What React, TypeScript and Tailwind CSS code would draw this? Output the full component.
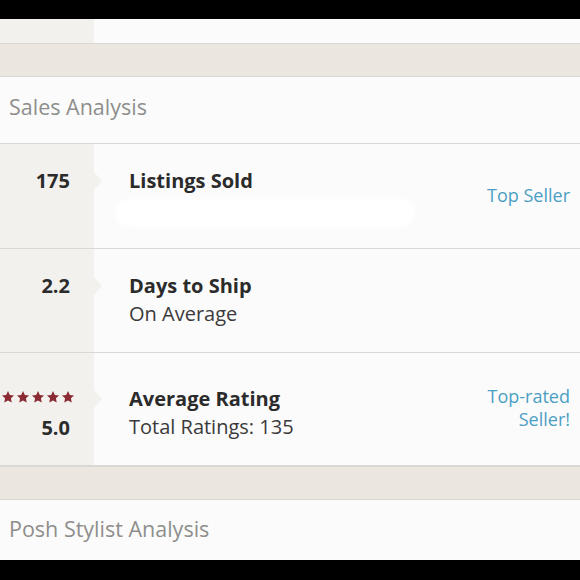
import React from "react";

const font = { fontFamily: "'Open Sans', Lato, 'Liberation Sans', sans-serif" };

function Star() {
  return (
    <svg viewBox="0 0 24 24" className="h-[14px] w-[14px]" aria-hidden>
      <path
        d="M12 1.8l3.1 6.6 7.2.9-5.3 5 1.4 7.1L12 17.9l-6.4 3.5 1.4-7.1-5.3-5 7.2-.9z"
        fill="#8a2a33"
      />
    </svg>
  );
}

function Notch({ top }: { top: string }) {
  return (
    <span
      className={`absolute left-[94px] ${top} h-0 w-0 border-y-[9px] border-l-[8px] border-y-transparent border-l-[#f2f1ed]`}
    />
  );
}

function Divider() {
  return <div className="h-[34px] border-y border-[#d9d8d4] bg-[#ebe7df]" />;
}

type RowProps = {
  left: React.ReactNode;
  title: string;
  sub?: React.ReactNode;
  right?: React.ReactNode;
  height: string;
  pad: string;
  notchTop: string;
};

function StatRow({ left, title, sub, right, height, pad, notchTop }: RowProps) {
  return (
    <div className={`relative flex border-b border-[#d9d8d4] ${height}`}>
      <div className={`flex w-[94px] shrink-0 flex-col items-end bg-[#f2f1ed] pr-[24px] ${pad}`}>
        {left}
      </div>
      <Notch top={notchTop} />
      <div className={`flex flex-1 items-start justify-between pl-[35px] pr-[10px] ${pad}`}>
        <div>
          <div className="text-[20px] font-bold leading-[24px] text-[#2b2b2b]">{title}</div>
          {sub}
        </div>
        {right}
      </div>
    </div>
  );
}

export default function App() {
  return (
    <div className="h-[580px] w-[580px] overflow-hidden bg-black" style={font}>
      <div className="mt-[19px] flex h-[541px] flex-col bg-[#fbfbfb]">
        <div className="flex h-[24px]">
          <div className="w-[94px] bg-[#f2f1ed]" />
        </div>
        <Divider />
        <div className="flex h-[67px] items-center border-b border-[#d9d8d4] px-[9px] pb-[6px] text-[21.5px] text-[#8e8e8c]">
          Sales Analysis
        </div>

        <StatRow
          height="h-[105px]"
          pad="pt-[25px]"
          notchTop="top-[28px]"
          left={<span className="text-[20px] font-bold leading-[24px] text-[#2b2b2b]">175</span>}
          title="Listings Sold"
          sub={<div className="ml-[-14px] mt-[6px] h-[28px] w-[300px] rounded-full bg-white blur-[2px]" />}
          right={<span className="mt-[16px] text-[18px] leading-[20px] text-[#4b9fc4]">Top Seller</span>}
        />

        <StatRow
          height="h-[104px]"
          pad="pt-[25px]"
          notchTop="top-[28px]"
          left={<span className="text-[20px] font-bold leading-[24px] text-[#2b2b2b]">2.2</span>}
          title="Days to Ship"
          sub={<div className="mt-[4px] text-[20px] leading-[24px] text-[#3a3a3a]">On Average</div>}
        />

        <StatRow
          height="h-[113px]"
          pad="pt-[34px]"
          notchTop="top-[37px]"
          left={
            <div className="-mr-[5px] flex flex-col items-end">
              <div className="mt-[3px] flex gap-[1px]">
                <Star />
                <Star />
                <Star />
                <Star />
                <Star />
              </div>
              <span className="mr-[5px] mt-[12px] text-[20px] font-bold leading-[24px] text-[#2b2b2b]">5.0</span>
            </div>
          }
          title="Average Rating"
          sub={<div className="mt-[4px] text-[20px] leading-[24px] text-[#3a3a3a]">Total Ratings: 135</div>}
          right={
            <span className="-mt-[2px] text-right text-[18px] leading-[23px] text-[#4b9fc4]">
              Top-rated
              <br />
              Seller!
            </span>
          }
        />

        <Divider />
        <div className="flex flex-1 items-center px-[9px] pb-[2px] text-[21.5px] text-[#8e8e8c]">
          Posh Stylist Analysis
        </div>
      </div>
    </div>
  );
}
